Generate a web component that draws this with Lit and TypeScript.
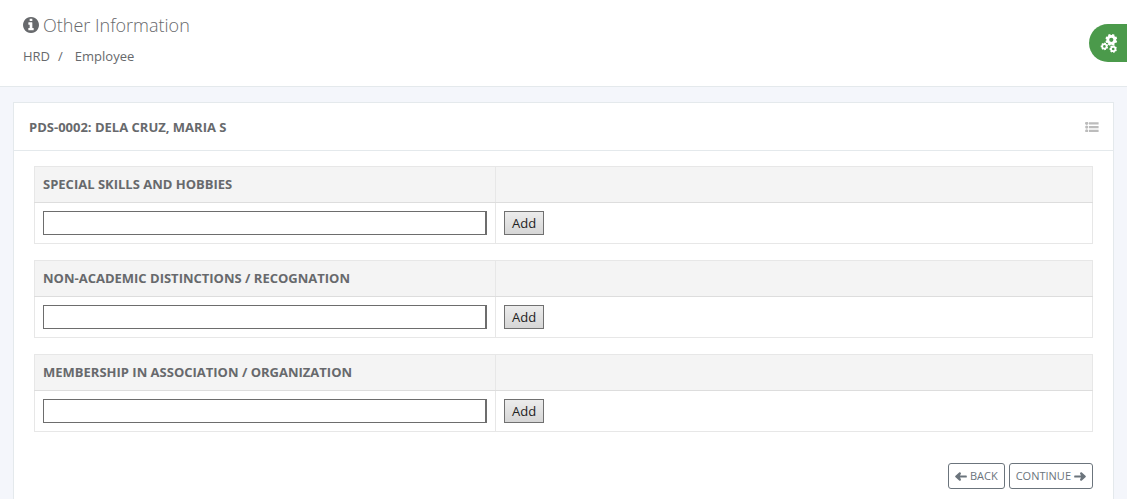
import { LitElement, html, css, svg } from "lit";
import { customElement, property } from "lit/decorators.js";

/** Outline of a cog wheel with a round hole, for an even-odd fill. */
function cog(cx: number, cy: number, r: number, teeth: number, hole: number): string {
  const inner = r * 0.82;
  const step = (Math.PI * 2) / teeth;
  const pts: string[] = [];
  for (let i = 0; i < teeth; i++) {
    const a = (i + 0.5) * step;
    for (const [rad, off] of [[inner, -0.34], [r, -0.24], [r, 0.24], [inner, 0.34]]) {
      const t = a + off * step;
      pts.push(`${(cx + rad * Math.cos(t)).toFixed(2)} ${(cy + rad * Math.sin(t)).toFixed(2)}`);
    }
  }
  return `M${pts.join("L")}Z M${cx - hole} ${cy}a${hole} ${hole} 0 1 0 ${hole * 2} 0a${hole} ${hole} 0 1 0 ${-hole * 2} 0Z`;
}

const INFO =
  "M1152 1376v-160q0-14-9-23t-23-9h-96v-512q0-14-9-23t-23-9h-320q-14 0-23 9t-9 23v160q0 14 9 23t23 9h96v320h-96q-14 0-23 9t-9 23v160q0 14 9 23t23 9h448q14 0 23-9t9-23zm-128-896v-160q0-14-9-23t-23-9h-192q-14 0-23 9t-9 23v160q0 14 9 23t23 9h192q14 0 23-9t9-23zm640 416q0 209-103 385.5t-279.5 279.5-385.5 103-385.5-103-279.5-279.5-103-385.5 103-385.5 279.5-279.5 385.5-103 385.5 103 279.5 279.5 103 385.5z";

const arrow = svg`<path d="M0.3 4.1L4.4 0.3Q5.2 -0.1 5.8 0.8L6 1.4L5 3.4H11.2Q11.8 3.4 11.8 4V5Q11.8 5.6 11.2 5.6H5L6 7.6L5.8 8.2Q5.2 9.1 4.4 8.7L0.3 4.9Q0 4.5 0.3 4.1Z" />`;

@customElement("entry-table")
export class EntryTable extends LitElement {
  @property() heading = "";

  static styles = css`
    :host { display: block; }
    .table {
      width: 100%;
      border-collapse: collapse;
      table-layout: fixed;
      border: 1px solid #e7e7e7;
    }
    .name { width: 461px; }
    th, td {
      border: 1px solid #e7e7e7;
      padding: 8px;
      box-sizing: border-box;
      text-align: left;
      vertical-align: top;
    }
    th {
      background: #f4f4f4;
      font-weight: 700;
      line-height: 19px;
      border-bottom-color: #ddd;
    }
    .row { display: flex; }
    .field {
      flex: 1;
      min-width: 0;
      height: 24px;
      box-sizing: border-box;
      border: 1px solid #6d6d6d;
      border-right-width: 2px;
      border-radius: 0;
      padding: 0 4px;
      background: #fff;
      font: inherit;
      color: #333;
    }
    .add {
      height: 24px;
      box-sizing: border-box;
      padding: 0 7px;
      border: 1px solid #707070;
      border-radius: 0;
      background: linear-gradient(#ececec, #d6d6d6);
      color: #222;
      font: inherit;
      line-height: 20px;
    }
  `;

  render() {
    return html`
      <table class="table">
        <colgroup><col class="name" /><col /></colgroup>
        <thead>
          <tr><th scope="col" id="heading">${this.heading}</th><th></th></tr>
        </thead>
        <tbody>
          <tr>
            <td><div class="row"><input class="field" type="text" aria-labelledby="heading" /></div></td>
            <td><div class="row"><button class="add" type="button">Add</button></div></td>
          </tr>
        </tbody>
      </table>
    `;
  }
}

@customElement("app-root")
export class AppRoot extends LitElement {
  static styles = css`
    :host {
      display: flex;
      flex-direction: column;
      min-height: 100vh;
      background: #f4f6fb;
      color: #67696c;
      font: 13px/20px "Open Sans", sans-serif;
    }
    .header {
      padding: 12px 23px 20px;
      background: #fff;
      border-bottom: 1px solid #e4e9ec;
    }
    .title {
      display: flex;
      align-items: center;
      gap: 4px;
      margin: 0 0 8px;
      font-size: 18px;
      line-height: 26px;
      font-weight: 300;
    }
    .title svg { width: 16px; height: 16px; fill: #67696c; }
    .crumbs {
      display: flex;
      margin: 0;
      padding: 0;
      list-style: none;
    }
    .crumbs li + li::before { content: "/"; padding: 0 12px 0 8px; }
    .crumbs a { color: inherit; text-decoration: none; }
    .settings {
      position: absolute;
      top: 24px;
      right: 0;
      display: flex;
      align-items: center;
      width: 38px;
      height: 38px;
      padding: 0 0 0 11px;
      border: 0;
      border-radius: 19px 0 0 19px;
      background: #4b9a4b;
    }
    .settings svg { width: 18px; height: 20px; fill: #fff; fill-rule: evenodd; }
    .card {
      flex: 1;
      margin: 15px 13px 0;
      background: #fff;
      border: 1px solid #e4e9ec;
      border-bottom: 0;
    }
    .card-head {
      display: flex;
      align-items: center;
      justify-content: space-between;
      padding: 14px 14px 13px 15px;
      border-bottom: 1px solid #e4e9ec;
    }
    .card-head h2 { margin: 0; font-size: 13px; line-height: 20px; font-weight: 700; }
    .menu { display: flex; padding: 0; border: 0; background: none; }
    .menu svg { width: 14px; height: 10px; fill: #bcbcbc; }
    .card-body {
      display: flex;
      flex-direction: column;
      gap: 16px;
      padding: 15px 20px 10px;
    }
    .actions {
      display: flex;
      justify-content: flex-end;
      gap: 4px;
      padding-top: 15px;
    }
    .nav {
      display: flex;
      align-items: center;
      gap: 3px;
      height: 26px;
      box-sizing: border-box;
      padding: 0 6px;
      border: 1px solid #6b747c;
      border-radius: 3px;
      background: #fff;
      color: #6b747c;
      font: 11px/16px "Open Sans", sans-serif;
    }
    .nav svg { width: 12px; height: 9px; fill: #6b747c; }
    .forward { transform: scaleX(-1); }
  `;

  render() {
    return html`
      <header class="header">
        <h1 class="title">
          <svg viewBox="128 128 1536 1536" aria-hidden="true"><path d=${INFO} /></svg>
          Other Information
        </h1>
        <nav aria-label="Breadcrumb">
          <ol class="crumbs">
            <li><a href="#hrd">HRD</a></li>
            <li><a href="#employee">Employee</a></li>
          </ol>
        </nav>
      </header>
      <button class="settings" type="button" aria-label="Settings">
        <svg viewBox="0 0 18 20" aria-hidden="true">
          <path d=${cog(11.3, 6.8, 6, 8, 2.1)} />
          <path d=${cog(4.4, 13.4, 3.8, 7, 1.3)} />
          <path d=${cog(13.2, 16, 3.8, 7, 1.3)} />
        </svg>
      </button>
      <main class="card">
        <div class="card-head">
          <h2>PDS-0002: DELA CRUZ, MARIA S</h2>
          <button class="menu" type="button" aria-label="Options">
            <svg viewBox="0 0 14 10" aria-hidden="true">
              <circle cx="1.7" cy="1.3" r="1.6" /><circle cx="1.7" cy="5.1" r="1.6" /><circle cx="1.7" cy="8.8" r="1.6" />
              <path d="M4 0.2h9.6v2.2H4zM4 4h9.6v2.2H4zM4 7.7h9.6v2.2H4z" />
            </svg>
          </button>
        </div>
        <div class="card-body">
          <entry-table heading="SPECIAL SKILLS AND HOBBIES"></entry-table>
          <entry-table heading="NON-ACADEMIC DISTINCTIONS / RECOGNATION"></entry-table>
          <entry-table heading="MEMBERSHIP IN ASSOCIATION / ORGANIZATION"></entry-table>
          <div class="actions">
            <button class="nav" type="button">
              <svg viewBox="0 0 12 9" aria-hidden="true">${arrow}</svg>BACK
            </button>
            <button class="nav" type="button">
              CONTINUE<svg class="forward" viewBox="0 0 12 9" aria-hidden="true">${arrow}</svg>
            </button>
          </div>
        </div>
      </main>
    `;
  }
}
